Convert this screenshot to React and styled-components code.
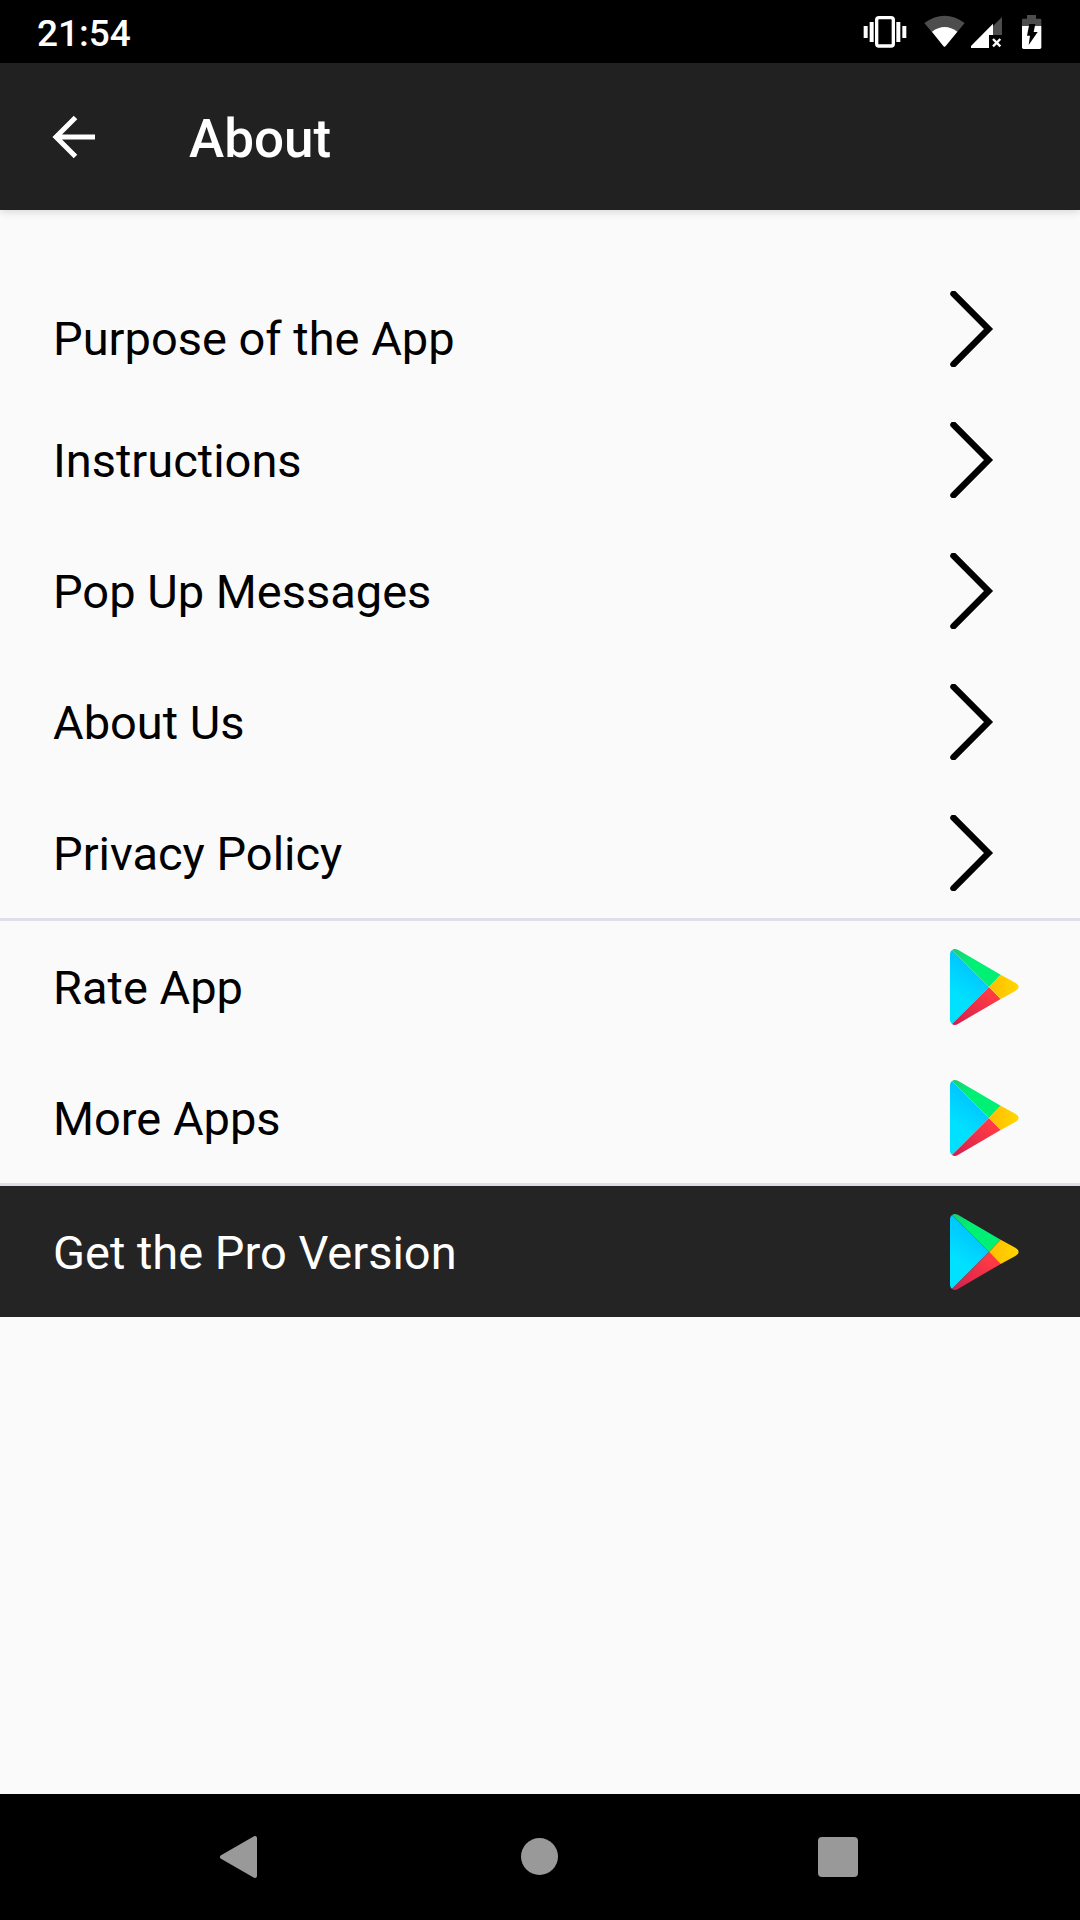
import React from 'react';
import styled, { createGlobalStyle } from 'styled-components';

const GlobalStyle = createGlobalStyle`
  * {
    box-sizing: border-box;
  }

  body {
    margin: 0;
    background-color: #fafafa;
    font-family: Roboto, 'Noto Sans', sans-serif;
  }

  svg {
    display: block;
    flex-shrink: 0;
  }
`;

const Screen = styled.div`
  display: flex;
  flex-direction: column;
  min-height: 100vh;
`;

const StatusBar = styled.div`
  display: flex;
  align-items: center;
  justify-content: space-between;
  height: 63px;
  padding: 0 37px;
  background-color: #000000;
  color: #ffffff;
`;

const Clock = styled.time`
  font-size: 37px;
  font-weight: 500;
  line-height: 58px;
  padding-top: 4px;
`;

const StatusIcons = styled.div`
  display: flex;
  align-items: center;
  gap: 2px;
`;

const AppBar = styled.header`
  position: relative;
  display: flex;
  align-items: center;
  gap: 79px;
  height: 147px;
  padding: 0 38px;
  background-color: #212121;
  color: #ffffff;
  box-shadow: 0 2px 8px rgba(0, 0, 0, 0.14);
`;

const IconButton = styled.button`
  display: flex;
  align-items: center;
  justify-content: center;
  padding: 0;
  border: none;
  background: none;
  color: inherit;
  cursor: pointer;
`;

const Title = styled.h1`
  margin: 0;
  padding-top: 4px;
  font-size: 53px;
  font-weight: 500;
  line-height: 60px;
`;

const Content = styled.main`
  flex: 1;
  padding-top: 53px;
`;

const List = styled.ul`
  margin: 0;
  padding: 0;
  list-style: none;
  border-bottom: ${(props) => (props.$last ? 'none' : '3px solid #dedfe9')};
`;

const Row = styled.a`
  display: flex;
  align-items: center;
  justify-content: space-between;
  height: 131px;
  padding: 0 61px 0 53px;
  background-color: ${(props) => (props.$dark ? '#242424' : 'transparent')};
  color: ${(props) => (props.$dark ? '#ffffff' : '#000000')};
  text-decoration: none;
`;

const Label = styled.span`
  padding-top: ${(props) => (props.$lowered ? '20px' : '2px')};
  font-size: 47px;
  line-height: 60px;
`;

const NavBar = styled.nav`
  display: flex;
  align-items: center;
  justify-content: center;
  gap: 202px;
  height: 126px;
  background-color: #000000;
  color: #999999;
`;

const NavButton = styled(IconButton)`
  width: 96px;
  height: 96px;
`;

const VibrateIcon = () => (
  <svg width="52" height="36" viewBox="39 39 156 108" fill="#ffffff">
    <path d="M41 75h12v36H41zM59 63h12v60H59zM139 63h12v60h-12zM157 75h12v36h-12z" />
    <rect x="80" y="50" width="50" height="85" rx="7" fill="none" stroke="#ffffff" strokeWidth="10" />
  </svg>
);

const WifiIcon = () => (
  <svg width="50" height="36" viewBox="201 39 150 108">
    <path d="M223 66Q284 22 344 66L287 135Q283 139 280 135Z" fill="#4d4d4d" />
    <path d="M246 92Q284 64 322 92L287 135Q283 139 280 135Z" fill="#ffffff" />
  </svg>
);

const SignalIcon = () => (
  <svg width="42" height="36" viewBox="357 39 126 108">
    <path d="M456 48V102H417V87Z" fill="#4d4d4d" />
    <path d="M429 68V102H417V141H363V135Z" fill="#ffffff" />
    <path d="M429 114l22 22M451 114l-22 22" stroke="#ffffff" strokeWidth="7" />
  </svg>
);

const BatteryIcon = () => (
  <svg width="30" height="36" viewBox="489 39 90 108">
    <path d="M516 75V57q0-4 4-4h11V42h27v11h12q4 0 4 4v18z" fill="#4d4d4d" />
    <path d="M516 75h58v64q0 5-5 5h-48q-5 0-5-5z" fill="#ffffff" />
    <path d="M538 69h18l-5 24h12l-27 39 4-28h-9z" fill="#000000" />
  </svg>
);

const BackArrow = () => (
  <svg width="72" height="64" viewBox="0 0 72 64" fill="none" stroke="#ffffff" strokeWidth="5">
    <path d="M57 32H18M37.5 12.5L18 32l19.500 19.500" />
  </svg>
);

const Chevron = () => (
  <svg width="69" height="76" viewBox="950 291 69 76" fill="none" stroke="#000000" strokeWidth="6.500">
    <path d="M953.5 293.8L988.5 329L953.5 364.2" strokeLinecap="round" />
  </svg>
);

const PlayLogo = () => (
  <svg width="69" height="76" viewBox="60 57 207 228">
    <defs>
      <linearGradient id="playBlue" x1="0.7" y1="0" x2="0.3" y2="1">
        <stop offset="0" stopColor="#00b8ff" />
        <stop offset="0.7" stopColor="#00e1ff" />
      </linearGradient>
      <linearGradient id="playRed" x1="1" y1="0" x2="0" y2="1">
        <stop offset="0.2" stopColor="#ff3a44" />
        <stop offset="1" stopColor="#d0204f" />
      </linearGradient>
      <linearGradient id="playGreen" x1="0" y1="0" x2="1" y2="1">
        <stop offset="0" stopColor="#1ecb72" />
        <stop offset="0.35" stopColor="#00f076" />
      </linearGradient>
      <linearGradient id="playYellow" x1="1" y1="0" x2="0" y2="0">
        <stop offset="0" stopColor="#ffd800" />
        <stop offset="1" stopColor="#ffbc00" />
      </linearGradient>
    </defs>
    <path d="M66 60Q60 64 60 72V270Q60 278 66 282L177 171Z" fill="url(#playBlue)" />
    <path d="M212 134L85 60Q74 54 66 60L177 171Z" fill="url(#playGreen)" />
    <path d="M212 207L85 281Q74 288 66 282L177 171Z" fill="url(#playRed)" />
    <path d="M212 134L256 158Q276 171 256 183L212 207L177 171Z" fill="url(#playYellow)" />
  </svg>
);

const infoItems = ['Purpose of the App', 'Instructions', 'Pop Up Messages', 'About Us', 'Privacy Policy'];
const storeItems = ['Rate App', 'More Apps'];

const App = () => {
  return (
    <>
      <GlobalStyle />
      <Screen>
        <StatusBar>
          <Clock>21:54</Clock>
          <StatusIcons>
            <VibrateIcon />
            <WifiIcon />
            <SignalIcon />
            <BatteryIcon />
          </StatusIcons>
        </StatusBar>
        <AppBar>
          <IconButton aria-label="Back">
            <BackArrow />
          </IconButton>
          <Title>About</Title>
        </AppBar>
        <Content>
          <List>
            {infoItems.map((item, index) => (
              <li key={item}>
                <Row href="#">
                  <Label $lowered={index === 0}>{item}</Label>
                  <Chevron />
                </Row>
              </li>
            ))}
          </List>
          <List>
            {storeItems.map((item) => (
              <li key={item}>
                <Row href="#">
                  <Label>{item}</Label>
                  <PlayLogo />
                </Row>
              </li>
            ))}
          </List>
          <List $last>
            <li>
              <Row href="#" $dark>
                <Label>Get the Pro Version</Label>
                <PlayLogo />
              </Row>
            </li>
          </List>
        </Content>
        <NavBar>
          <NavButton aria-label="Navigate back">
            <svg width="44" height="44" viewBox="0 0 44 44" fill="currentColor" stroke="currentColor" strokeWidth="4" strokeLinejoin="round">
              <path d="M2 22L35 3V41Z" />
            </svg>
          </NavButton>
          <NavButton aria-label="Home">
            <svg width="38" height="38" viewBox="0 0 38 38" fill="currentColor">
              <circle cx="18.500" cy="18.500" r="18.500" />
            </svg>
          </NavButton>
          <NavButton aria-label="Recent apps">
            <svg width="40" height="40" viewBox="0 0 40 40" fill="currentColor">
              <rect width="40" height="40" rx="4" />
            </svg>
          </NavButton>
        </NavBar>
      </Screen>
    </>
  );
};

export default App;
